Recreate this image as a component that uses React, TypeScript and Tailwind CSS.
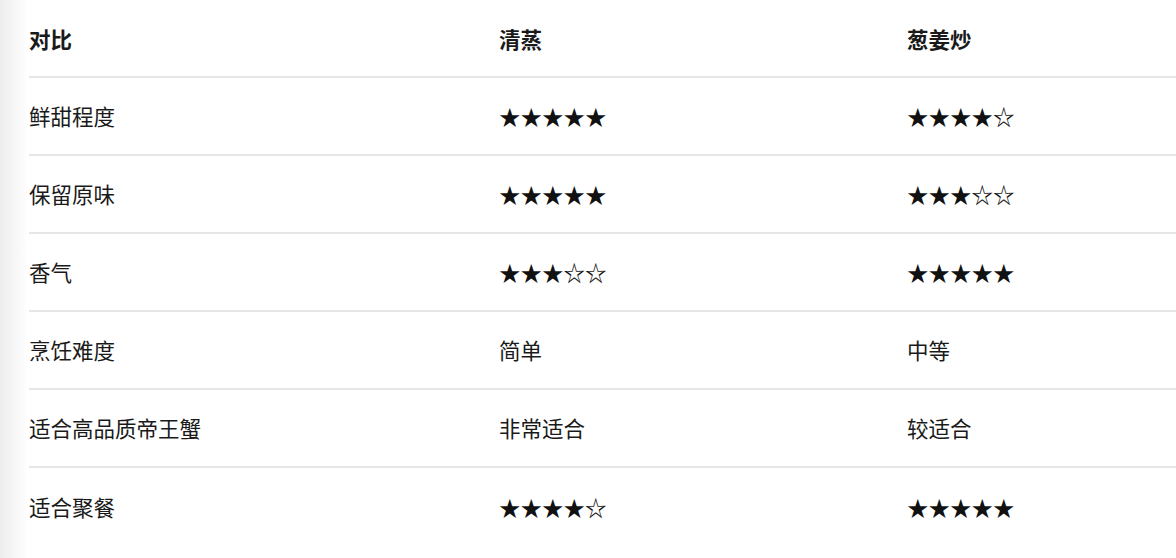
const rows: [string, string, string][] = [
  ["鲜甜程度", "★★★★★", "★★★★☆"],
  ["保留原味", "★★★★★", "★★★☆☆"],
  ["香气", "★★★☆☆", "★★★★★"],
  ["烹饪难度", "简单", "中等"],
  ["适合高品质帝王蟹", "非常适合", "较适合"],
  ["适合聚餐", "★★★★☆", "★★★★★"],
];

export default function App() {
  return (
    <div
      className="h-[558px] w-full overflow-hidden bg-[linear-gradient(to_right,#ececec,#ffffff_28px)] pl-[29px] text-[#1a1a1a]"
      style={{ fontFamily: '"Noto Sans CJK SC", "Noto Sans", sans-serif' }}
    >
      <div className="grid grid-cols-[470px_408px_1fr] text-[21.5px]">
        <div className="flex h-[78px] items-center pt-[2px] font-bold border-b-2 border-[#e6e6e6]">对比</div>
        <div className="flex h-[78px] items-center pt-[2px] font-bold border-b-2 border-[#e6e6e6]">清蒸</div>
        <div className="flex h-[78px] items-center pt-[2px] font-bold border-b-2 border-[#e6e6e6]">葱姜炒</div>
        {rows.map((r, i) => (
          <div key={i} className="contents">
            {r.map((c, j) => (
              <div
                key={j}
                className={`flex h-[78px] items-center ${
                  i < rows.length - 1 ? "border-b-2 border-[#e6e6e6]" : ""
                } ${c.includes("★") || c.includes("☆") ? "text-[#111]" : ""}`}
              >
                {c}
              </div>
            ))}
          </div>
        ))}
      </div>
    </div>
  );
}
